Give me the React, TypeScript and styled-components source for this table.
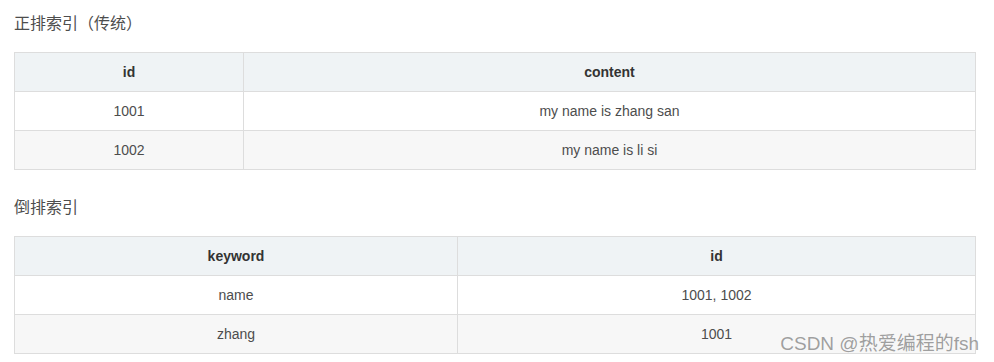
import styled, { createGlobalStyle } from 'styled-components';

const GlobalStyle = createGlobalStyle`
  html, body {
    margin: 0;
    padding: 0;
    background: #ffffff;
  }
  body {
    font-family: "Liberation Sans", Arial, "Noto Sans CJK SC", sans-serif;
    color: #4d4d4d;
  }
`;

const Page = styled.div`
  position: relative;
  width: 994px;
  height: 362px;
  padding: 0 18px 0 14px;
  box-sizing: border-box;
  overflow: hidden;
`;

const Title = styled.p`
  margin: 0;
  padding-top: ${(p: { $top: number }) => p.$top}px;
  height: 24px;
  line-height: 24px;
  font-size: 16px;
  color: #4d4d4d;
  font-family: "Liberation Sans", "Noto Sans CJK SC", sans-serif;
`;

const Table = styled.table`
  margin-top: ${(p: { $top: number }) => p.$top}px;
  width: 962px;
  border-collapse: collapse;
  table-layout: fixed;
  font-size: 14px;
  tr:nth-child(even) td {
    background: #f7f7f7;
  }
`;

const Th = styled.th`
  height: 38px;
  padding: 0;
  background: #eff3f5;
  border: 1px solid #dddddd;
  color: #333333;
  font-weight: bold;
  text-align: center;
`;

const Td = styled.td`
  height: 38px;
  padding: 0;
  background: #ffffff;
  border: 1px solid #dddddd;
  color: #4d4d4d;
  text-align: center;
`;

const Watermark = styled.span`
  position: absolute;
  right: 15px;
  bottom: 7px;
  font-size: 19px;
  line-height: 22px;
  color: rgba(120, 120, 120, 0.7);
  font-family: "Liberation Sans", "Noto Sans CJK SC", sans-serif;
`;

type IndexTableProps = {
  top: number;
  firstWidth: number;
  headers: string[];
  rows: string[][];
};

const IndexTable = ({ top, firstWidth, headers, rows }: IndexTableProps) => (
  <Table $top={top}>
    <colgroup>
      <col style={{ width: firstWidth }} />
      <col />
    </colgroup>
    <thead>
      <tr>
        {headers.map((h) => (
          <Th key={h}>{h}</Th>
        ))}
      </tr>
    </thead>
    <tbody>
      {rows.map((r, i) => (
        <tr key={i}>
          {r.map((c, j) => (
            <Td key={j}>{c}</Td>
          ))}
        </tr>
      ))}
    </tbody>
  </Table>
);

export default function App() {
  return (
    <>
      <GlobalStyle />
      <Page>
        <Title $top={12}>正排索引（传统）</Title>
        <IndexTable
          top={16}
          firstWidth={229}
          headers={['id', 'content']}
          rows={[
            ['1001', 'my name is zhang san'],
            ['1002', 'my name is li si'],
          ]}
        />
        <Title $top={26}>倒排索引</Title>
        <IndexTable
          top={16}
          firstWidth={443}
          headers={['keyword', 'id']}
          rows={[
            ['name', '1001, 1002'],
            ['zhang', '1001'],
          ]}
        />
        <Watermark>CSDN @热爱编程的fsh</Watermark>
      </Page>
    </>
  );
}
